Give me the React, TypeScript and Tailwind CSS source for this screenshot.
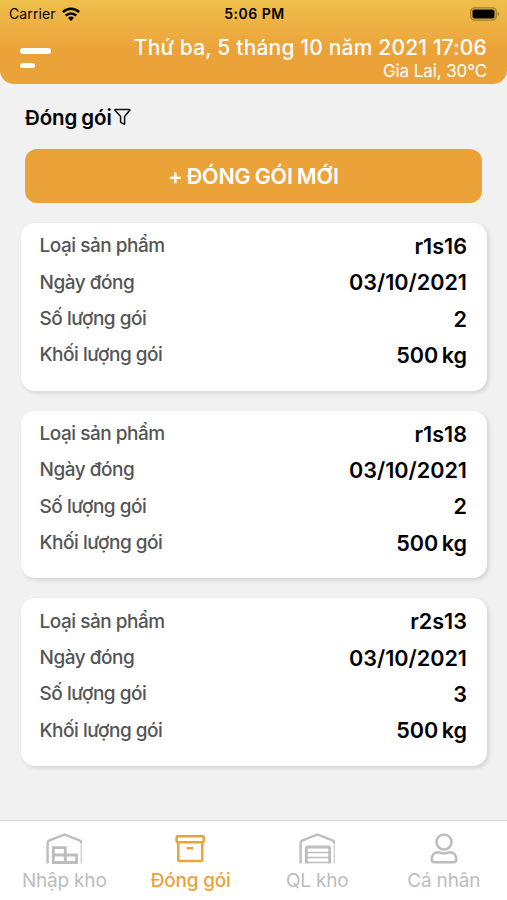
import { clsx } from "clsx";
import type { ReactNode } from "react";

type Pack = {
  product: string;
  date: string;
  count: number;
  weight: string;
};

const packs: Pack[] = [
  { product: "r1s16", date: "03/10/2021", count: 2, weight: "500 kg" },
  { product: "r1s18", date: "03/10/2021", count: 2, weight: "500 kg" },
  { product: "r2s13", date: "03/10/2021", count: 3, weight: "500 kg" },
];

export default function App() {
  return (
    <div className="w-[507px] h-[900px] flex flex-col overflow-hidden bg-[#f1f1f1] font-['Inter','Liberation_Sans',sans-serif] text-black">
      <Header />
      <main className="flex-1 min-h-0 pt-[20px]">
        <div className="flex items-center h-[27px] pl-[25px]">
          <h1 className="pt-px text-[20.5px] leading-none font-semibold tracking-[-0.1px] [word-spacing:-1px]">Đóng gói</h1>
          <FilterIcon />
        </div>
        <div className="px-[25px] mt-[18px]">
          <button className="block w-full h-[54px] rounded-[12px] bg-[#eba239] text-white text-[21.5px] font-semibold tracking-[-0.2px] [word-spacing:-1px]">
            + ĐÓNG GÓI MỚI
          </button>
        </div>
        <div className="flex flex-col gap-5 pl-[20.5px] pr-5 mt-5">
          {packs.map((p) => (
            <PackCard key={p.product} pack={p} />
          ))}
        </div>
      </main>
      <TabBar />
    </div>
  );
}

function Header() {
  return (
    <header className="h-[84px] shrink-0 rounded-b-[14px] bg-linear-to-b from-[#efbf4b] to-[#eba239] to-60%">
      <div className="grid grid-cols-3 items-center h-[27px] pl-[9px] pr-[7px]">
        <div className="flex items-center gap-[6px] text-[14px] tracking-[0.1px]">
          <span>Carrier</span>
          <WifiIcon />
        </div>
        <div className="text-center text-[14px] font-semibold tracking-[0.5px]">5:06 PM</div>
        <div className="flex justify-end">
          <BatteryIcon />
        </div>
      </div>
      <div className="flex justify-between pl-[20px] pr-5">
        <button aria-label="Menu" className="flex flex-col gap-[9px] self-start mt-[21px]">
          <span className="block w-[31px] h-[5.5px] rounded-full bg-white" />
          <span className="block w-[15px] h-[5.5px] rounded-full bg-white" />
        </button>
        <div className="text-right text-white">
          <div className="mt-[7px] text-[21px] leading-[27px] font-medium tracking-[0.18px]">
            Thứ ba, 5 tháng 10 năm 2021 17:06
          </div>
          <div className="text-[17px] leading-5 tracking-[-0.1px]">Gia Lai, 30°C</div>
        </div>
      </div>
    </header>
  );
}

function PackCard({ pack }: { pack: Pack }) {
  return (
    <section className="h-[167.7px] rounded-[14px] bg-white pl-[19px] pr-5 pt-[5px] shadow-[2px_2px_4px_rgba(0,0,0,0.13)]">
      <Row label="Loại sản phẩm" value={pack.product} />
      <Row label="Ngày đóng" value={pack.date} />
      <Row label="Số lượng gói" value={pack.count} />
      <Row label="Khối lượng gói" value={pack.weight} />
    </section>
  );
}

function Row({ label, value }: { label: string; value: ReactNode }) {
  return (
    <div className="flex items-center justify-between h-[36.3px]">
      <span className="pt-px text-[19px] font-[550] tracking-[-0.48px] text-[#555]">{label}</span>
      <span className="text-[21.6px] font-semibold [word-spacing:-2px]">{value}</span>
    </div>
  );
}

function TabBar() {
  return (
    <nav className="grid grid-cols-4 h-20 shrink-0 border-t border-[#d8d8d8] bg-white pl-[1px]">
      <Tab label="Nhập kho" icon={<StorageIcon />} />
      <Tab label="Đóng gói" icon={<BoxIcon />} active />
      <Tab label="QL kho" icon={<GarageIcon />} />
      <Tab label="Cá nhân" icon={<PersonIcon />} />
    </nav>
  );
}

function Tab({ label, icon, active }: { label: string; icon: ReactNode; active?: boolean }) {
  return (
    <button
      className={clsx(
        "flex flex-col items-center pt-[11px]",
        active ? "text-[#eba239] font-medium" : "text-[#bdbdbd]",
      )}
    >
      {icon}
      <span className="mt-[4.5px] text-[19px] leading-6 tracking-[-0.2px] whitespace-nowrap">{label}</span>
    </button>
  );
}

function WifiIcon() {
  return (
    <svg width="18" height="14" viewBox="0 0 18 14" fill="none" stroke="black" strokeWidth="2.6">
      <path d="M.9 5.1a11.6 11.6 0 0 1 16.2 0" />
      <path d="M3.7 8.7a7.5 7.5 0 0 1 10.6 0" />
      <path d="M9 14 6 11a4.3 4.3 0 0 1 6 0z" fill="black" stroke="none" />
    </svg>
  );
}

function BatteryIcon() {
  return (
    <svg width="30" height="14" viewBox="0 0 30 14">
      <rect x=".8" y=".8" width="25.4" height="12.4" rx="3.6" fill="none" stroke="#9c7d31" strokeWidth="1.3" />
      <rect x="2.5" y="2.5" width="22" height="9" rx="1.8" fill="black" />
      <path d="M27.6 4.8c2.2.7 2.2 3.7 0 4.4z" fill="#9c7d31" />
    </svg>
  );
}

function FilterIcon() {
  return (
    <svg className="ml-[2px] -mt-[2px]" width="17" height="18" viewBox="0 0 17 18" fill="none" stroke="#111" strokeWidth="1.5" strokeLinejoin="round">
      <path d="M1.3 1.5h14.2c.4 0 .5.5.3.8L10.6 8.6v7.7L6.6 14.3V8.6L1 2.3c-.3-.3-.1-.8.3-.8z" />
    </svg>
  );
}

function StorageIcon() {
  return (
    <svg width="36" height="32" viewBox="0 0 36 32" fill="none" stroke="currentColor" strokeWidth="2.4">
      <path d="M1.6 31.5V11Q1.6 9.3 3 8.6L18.5 2.5 34 8.6Q35.2 9.1 35.2 11" />
      <path d="M35.2 10V31.5" strokeWidth="1" />
      <path d="M7.3 30.5V15.7H19.3V30.5zM7.3 23H30.5V30.5H19.3" strokeWidth="2.8" />
    </svg>
  );
}

function GarageIcon() {
  return (
    <svg width="36" height="32" viewBox="0 0 36 32" fill="none" stroke="currentColor" strokeWidth="2.4">
      <path d="M1.6 31.5V11Q1.6 9.3 3 8.6L18.5 2.5 34 8.6Q35.2 9.1 35.2 11" />
      <path d="M35.2 10V31.5" strokeWidth="1" />
      <path d="M7.3 31.5V16.5Q7.3 15 8.8 15H29.2Q30.7 15 30.7 16.5V31.5" strokeWidth="2.8" />
      <path d="M7.3 20.5H30.7M7.3 25.5H30.7M7.3 30.5H30.7" strokeWidth="1.7" />
    </svg>
  );
}

function BoxIcon() {
  return (
    <svg width="32" height="32" viewBox="0 0 32 32" fill="none" stroke="currentColor" strokeWidth="2.5" strokeLinejoin="round" strokeLinecap="round">
      <rect x="1.6" y="4.3" width="27.2" height="6" rx="1.2" />
      <path d="M3.3 10.3V27.5Q3.3 29 4.8 29H25.7Q27.2 29 27.2 27.5V10.3M12.8 16.2H17.4" />
    </svg>
  );
}

function PersonIcon() {
  return (
    <svg width="28" height="32" viewBox="0 0 28 32" fill="none" stroke="currentColor" strokeWidth="2.5">
      <circle cx="14" cy="10" r="7.5" />
      <path d="M8 20.2C10 20.2 11 21.4 14 21.4S18 20.2 20 20.2C24 20.2 26.3 23.2 26.3 27.5Q26.3 30.2 23.4 30.2H4.6Q1.7 30.2 1.7 27.5C1.7 23.2 4 20.2 8 20.2z" />
    </svg>
  );
}
